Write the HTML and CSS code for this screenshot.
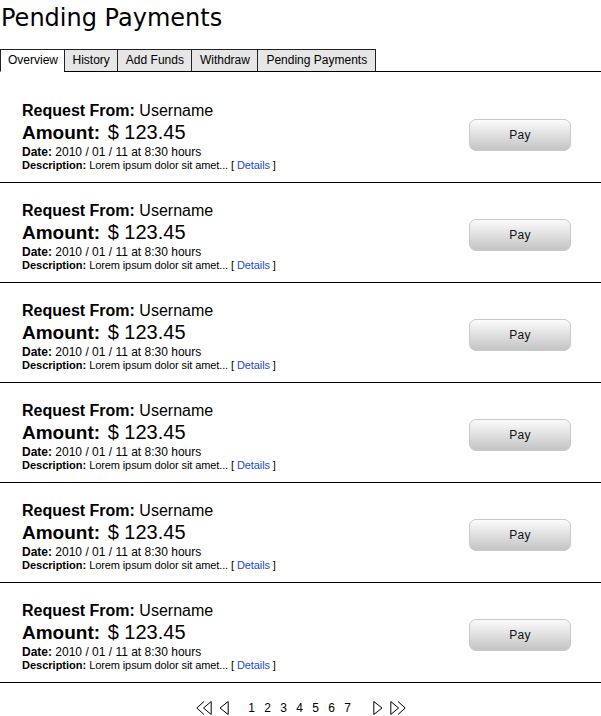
FILE: index.html
```html
<!DOCTYPE html>
<html lang="en">
<head>
  <meta charset="UTF-8" />
  <title>Pending Payments</title>
  <link rel="stylesheet" href="styles.css">
</head>
<body>

  <h1 class="title">Pending Payments</h1>

  <ul class="tabs">
    <li class="active">Overview</li>
    <li>History</li>
    <li>Add Funds</li>
    <li>Withdraw</li>
    <li class="last">Pending Payments</li>
    <li class="fill"></li>
  </ul>

  <div class="payments">
    <div class="payment">
      <div class="info">
        <div class="from"><b>Request From:</b> Username</div>
        <div class="amount"><b>Amount:</b><span class="value"> $ 123.45</span></div>
        <div class="date"><b>Date:</b> 2010 / 01 / 11 at 8:30 hours</div>
        <div class="desc"><b>Description:</b> Lorem ipsum dolor sit amet... [ <a href="#">Details</a> ]</div>
      </div>
      <button class="pay">Pay</button>
    </div>
    <div class="payment">
      <div class="info">
        <div class="from"><b>Request From:</b> Username</div>
        <div class="amount"><b>Amount:</b><span class="value"> $ 123.45</span></div>
        <div class="date"><b>Date:</b> 2010 / 01 / 11 at 8:30 hours</div>
        <div class="desc"><b>Description:</b> Lorem ipsum dolor sit amet... [ <a href="#">Details</a> ]</div>
      </div>
      <button class="pay">Pay</button>
    </div>
    <div class="payment">
      <div class="info">
        <div class="from"><b>Request From:</b> Username</div>
        <div class="amount"><b>Amount:</b><span class="value"> $ 123.45</span></div>
        <div class="date"><b>Date:</b> 2010 / 01 / 11 at 8:30 hours</div>
        <div class="desc"><b>Description:</b> Lorem ipsum dolor sit amet... [ <a href="#">Details</a> ]</div>
      </div>
      <button class="pay">Pay</button>
    </div>
    <div class="payment">
      <div class="info">
        <div class="from"><b>Request From:</b> Username</div>
        <div class="amount"><b>Amount:</b><span class="value"> $ 123.45</span></div>
        <div class="date"><b>Date:</b> 2010 / 01 / 11 at 8:30 hours</div>
        <div class="desc"><b>Description:</b> Lorem ipsum dolor sit amet... [ <a href="#">Details</a> ]</div>
      </div>
      <button class="pay">Pay</button>
    </div>
    <div class="payment">
      <div class="info">
        <div class="from"><b>Request From:</b> Username</div>
        <div class="amount"><b>Amount:</b><span class="value"> $ 123.45</span></div>
        <div class="date"><b>Date:</b> 2010 / 01 / 11 at 8:30 hours</div>
        <div class="desc"><b>Description:</b> Lorem ipsum dolor sit amet... [ <a href="#">Details</a> ]</div>
      </div>
      <button class="pay">Pay</button>
    </div>
    <div class="payment">
      <div class="info">
        <div class="from"><b>Request From:</b> Username</div>
        <div class="amount"><b>Amount:</b><span class="value"> $ 123.45</span></div>
        <div class="date"><b>Date:</b> 2010 / 01 / 11 at 8:30 hours</div>
        <div class="desc"><b>Description:</b> Lorem ipsum dolor sit amet... [ <a href="#">Details</a> ]</div>
      </div>
      <button class="pay">Pay</button>
    </div>
  </div>

  <div class="pager">
    <svg class="nav dbl first" width="16" height="14" viewBox="0 0 16 14">
      <polyline points="8,0.5 0.8,7 8,13.5" />
      <polygon points="15.2,0.5 7.5,7 15.2,13.5" />
    </svg>
    <svg class="nav prev" width="10" height="14" viewBox="0 0 10 14">
      <polygon points="9.2,0.5 1,7 9.2,13.5" />
    </svg>
    <span class="pages">
      <span>1</span><span>2</span><span>3</span><span>4</span><span>5</span><span>6</span><span>7</span>
    </span>
    <svg class="nav next" width="10" height="14" viewBox="0 0 10 14">
      <polygon points="0.8,0.5 9,7 0.8,13.5" />
    </svg>
    <svg class="nav dbl last" width="16" height="14" viewBox="0 0 16 14">
      <polygon points="0.8,0.5 8.5,7 0.8,13.5" />
      <polyline points="8,0.5 15.2,7 8,13.5" />
    </svg>
  </div>

</body>
</html>
```

FILE: styles.css
```css
* {
  box-sizing: border-box;
}

body {
  margin: 0;
  font-family: 'Liberation Sans', Arial, sans-serif;
  color: #000;
  background: #fff;
}

.title {
  font-family: 'DejaVu Sans', Verdana, sans-serif;
  font-size: 24px;
  font-weight: normal;
  line-height: 30px;
  margin: 3px 0 0;
  padding-left: 1px;
}

.tabs {
  display: flex;
  list-style: none;
  margin: 16px 0 0;
  padding: 0;
  font-size: 12px;
}

.tabs li {
  height: 23px;
  line-height: 21px;
  padding: 0 7.5px;
  background: #e6e6e6;
  border-top: 1px solid #222;
  border-left: 1px solid #222;
  border-bottom: 1px solid #000;
}

.tabs li.active {
  background: #fff;
  border-bottom-color: #fff;
  padding: 0 6px 0 7px;
}

.tabs li.last {
  padding: 0 8px;
  border-right: 1px solid #222;
}

.tabs li.fill {
  flex: 1;
  padding: 0;
  background: none;
  border-top: none;
  border-left: none;
}

.payments {
  padding-top: 11px;
}

.payment {
  display: flex;
  align-items: flex-start;
  height: 100px;
  padding: 18px 30px 0 22px;
  border-bottom: 1px solid #000;
}

.info {
  flex: 1;
}

.from {
  font-size: 16px;
  line-height: 20px;
}

.amount {
  font-size: 19px;
  line-height: 22px;
}

.amount .value {
  font-size: 20px;
  padding-left: 2px;
}

.date {
  font-size: 12px;
  line-height: 16px;
}

.desc {
  font-size: 11px;
  line-height: 10px;
  letter-spacing: -0.1px;
}

.desc b {
  letter-spacing: 0;
}

.desc a {
  color: #1a4bc6;
  text-decoration: none;
}

.pay {
  width: 102px;
  height: 32px;
  margin-top: 18px;
  font-family: 'Liberation Sans', Arial, sans-serif;
  font-size: 12px;
  letter-spacing: 0.3px;
  color: #111;
  background: linear-gradient(#fbfbfb, #c4c4c4);
  border: 1px solid #c9c9c9;
  border-radius: 7px;
  cursor: pointer;
}

.pager {
  display: flex;
  justify-content: center;
  align-items: center;
  margin-top: 17px;
  height: 16px;
}

.nav {
  display: block;
  fill: none;
  stroke: #000;
  stroke-width: 1;
}

.first {
  margin-right: 7px;
}

.prev {
  margin-right: 15px;
}

.next {
  margin-left: 17px;
  margin-right: 7px;
}

.pages {
  display: flex;
  font-size: 12px;
}

.pages span {
  width: 16px;
  text-align: center;
}
```
